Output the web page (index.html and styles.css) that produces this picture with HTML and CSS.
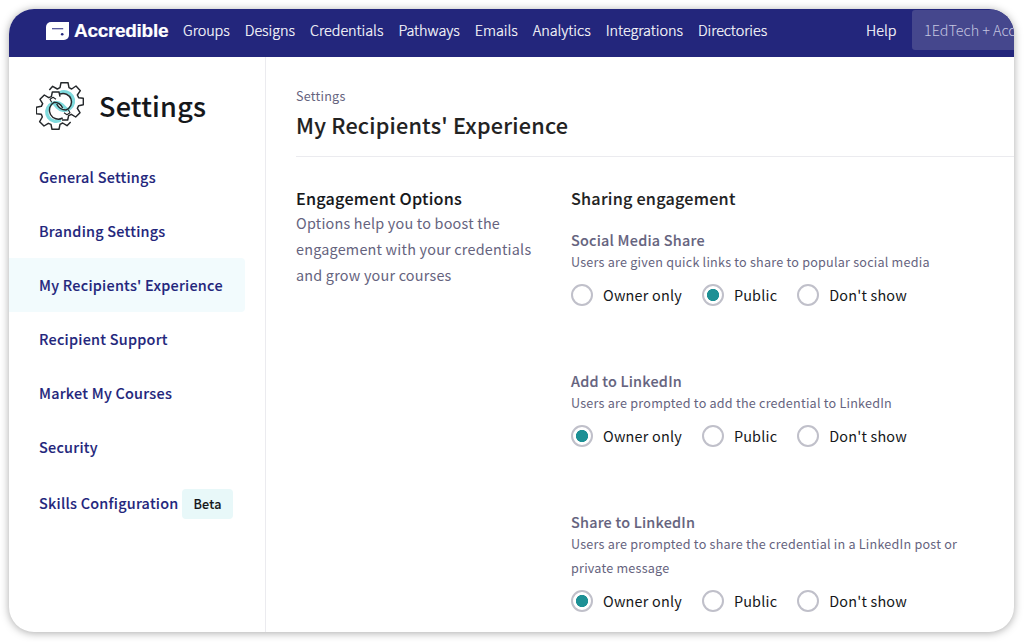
FILE: index.html
```html
<!DOCTYPE html>
<html lang="en">
<head>
<meta charset="utf-8">
<title>Settings</title>
<link rel="stylesheet" href="styles.css">
</head>
<body>
<div class="shell">
  <header class="topbar">
    <div class="brand">
      <svg class="brand-mark" viewBox="0 0 23 18" width="23" height="18"><path d="M5 0H23V13a5 5 0 0 1-5 5H0V5a5 5 0 0 1 5-5Z" fill="#fff"/><path d="M6 6.7H17.2" stroke="#23267c" stroke-width="1.1"/><circle cx="16.2" cy="12.2" r="1.3" fill="#23267c"/></svg>
      <span class="brand-name">Accredible</span>
    </div>
    <nav class="nav"><a>Groups</a><a>Designs</a><a>Credentials</a><a>Pathways</a><a>Emails</a><a>Analytics</a><a>Integrations</a><a>Directories</a></nav>
    <div class="account"><a class="help">Help</a><a class="org">1EdTech + Acc</a></div>
  </header>
  <div class="body">
    <aside class="sidebar">
      <div class="side-head">
        <svg class="gears" viewBox="18 18 144 144" width="48" height="48" fill="none">
          <g stroke="#7fdadd" stroke-width="10"><path d="M90 50A28 28 0 1 1 82 94L70 80"/><path d="M92 132A28 28 0 1 1 96 86L110 100"/></g>
          <g stroke="#25282b" stroke-width="4.4" stroke-linejoin="round">
            <path d="M58 42 68 31 82 39 90 35 93 20H114L117 35 125 39 138 30 151 44 142 57 146 65 160 67V86L146 89 142 97 150 110 137 123 124 115 116 119 113 132H96"/>
            <path d="M122 138 111 149 98 141 90 145 87 160H66L63 145 55 142 42 150 29 137 37 123 34 115 19 113V94L34 91 38 83 30 70 43 57 56 65 64 62 67 48H87L90 62"/>
            <path d="M90 54A25 25 0 1 1 108 102C94 102 86 96 80 84"/>
            <path d="M98 126A25 25 0 1 1 72 79C86 79 92 84 98 96"/>
            <path d="M65 79 60 70 69 64 78 70M115 101 120 110 111 116 102 110" stroke-width="3.4"/>
          </g>
        </svg>
        <h2>Settings</h2>
      </div>
      <ul class="menu">
        <li>General Settings</li>
        <li>Branding Settings</li>
        <li class="active">My Recipients' Experience</li>
        <li>Recipient Support</li>
        <li>Market My Courses</li>
        <li>Security</li>
        <li class="with-badge">Skills Configuration<span class="beta">Beta</span></li>
      </ul>
    </aside>
    <main class="main">
      <div class="page-head">
        <div class="crumb">Settings</div>
        <h1>My Recipients' Experience</h1>
      </div>
      <div class="columns">
        <section class="intro">
          <h3>Engagement Options</h3>
          <p>Options help you to boost the<br>engagement with your credentials<br>and grow your courses</p>
        </section>
        <section class="options">
          <h3>Sharing engagement</h3>
          <div class="option">
            <h4>Social Media Share</h4>
            <p>Users are given quick links to share to popular social media</p>
            <div class="radios"><label><i></i>Owner only</label><label><i class="on"></i>Public</label><label><i></i>Don't show</label></div>
          </div>
          <div class="option">
            <h4>Add to LinkedIn</h4>
            <p>Users are prompted to add the credential to LinkedIn</p>
            <div class="radios"><label><i class="on"></i>Owner only</label><label><i></i>Public</label><label><i></i>Don't show</label></div>
          </div>
          <div class="option">
            <h4>Share to LinkedIn</h4>
            <p>Users are prompted to share the credential in a LinkedIn post or<br>private message</p>
            <div class="radios"><label><i class="on"></i>Owner only</label><label><i></i>Public</label><label><i></i>Don't show</label></div>
          </div>
        </section>
      </div>
    </main>
  </div>
</div>
</body>
</html>
```
FILE: styles.css
```css
* { box-sizing: border-box; margin: 0; padding: 0; }
body { height: 642px; padding: 9px 10px 10px 9px; overflow: hidden; background: #fff; font: 14.4px/26px "Noto Sans CJK SC", "Noto Sans", sans-serif; letter-spacing: .23px; color: #15171a; }
.shell { height: 623px; border-radius: 25px; overflow: hidden; background: #fff; box-shadow: 0 1px 9px rgba(0,0,0,.34); display: flex; flex-direction: column; }
.topbar { height: 48px; flex: none; background: #23267c; display: flex; align-items: center; color: #fff; padding: 0 0 4px 37px; white-space: nowrap; font-weight: 300; line-height: 42px; letter-spacing: -.03px; -webkit-text-stroke: .2px currentColor; }
.brand { display: flex; align-items: center; gap: 5px; width: 137px; }
.brand-name { font: 700 19px/44px "Liberation Sans", Arial, sans-serif; letter-spacing: -.3px; -webkit-text-stroke: .2px #fff; }
.nav { display: flex; gap: 15px; padding-bottom: 2px; }
.account { margin: 1px 0 0 auto; align-self: flex-start; display: flex; width: 148px; flex: none; line-height: 40px; }
.help { width: 46px; flex: none; }
.org { height: 40px; flex: 1; background: #45478d; color: #c4c5e0; border-radius: 3px 0 0 3px; padding-left: 12px; -webkit-text-stroke: 0; }
.body { flex: 1; display: flex; min-height: 0; }
.sidebar { width: 257px; flex: none; border-right: 1px solid #ebebef; }
.side-head { display: flex; align-items: center; gap: 15px; height: 97px; padding-left: 27px; }
h2 { font-size: 27px; font-weight: 500; line-height: 40px; }
.menu { list-style: none; margin-top: -4px; color: #23267c; font-weight: 500; letter-spacing: .25px; }
.menu li { height: 54px; line-height: 54px; padding-left: 30px; margin-right: 20px; white-space: nowrap; }
.menu .active { background: #f2fbfd; border-radius: 0 4px 4px 0; }
.menu .with-badge { height: 59px; line-height: 57px; display: flex; align-items: center; gap: 3.5px; }
.menu .with-badge { line-height: 26px; padding-bottom: 1px; }
.menu .beta { height: 30px; line-height: 30px; width: 51px; margin-top: 1px; text-align: center; border-radius: 4px; background: #e8f8f9; color: #15171a; font-size: 12.6px; }
.main { flex: 1; min-width: 0; padding-left: 30px; }
.page-head { height: 100px; border-bottom: 1px solid #ebebef; padding-top: 29px; }
.crumb { font-size: 12.6px; line-height: 20px; color: #65637e; }
h1 { font-size: 21.6px; line-height: 36px; font-weight: 500; color: #222; margin-top: 1px; }
.columns { display: grid; grid-template-columns: 275px 1fr; padding-top: 28px; }
h3 { font-size: 16.2px; font-weight: 500; line-height: 26px; }
h1, h2, h3, h4, .menu { -webkit-text-stroke: .1px currentColor; }
.intro p { color: #65637e; margin-top: -1px; letter-spacing: .21px; }
.options h3 { color: #222; margin-bottom: 16px; }
.option { height: 141px; color: #65637e; }
h4 { font-size: 14.4px; font-weight: 500; line-height: 26px; }
.option p { font-size: 12.6px; line-height: 24px; margin-top: -3px; letter-spacing: .22px; }
.radios { display: flex; gap: 20px; color: #15171a; margin-top: 8px; line-height: 26px; letter-spacing: .2px; }
.radios label { display: flex; align-items: center; gap: 10px; white-space: nowrap; }
.radios i { width: 22px; height: 22px; border: 2px solid #c0c0ca; border-radius: 50%; background: #fff; }
.radios i.on { background: radial-gradient(circle, #1d9095 5.7px, #fff 6.5px); }
```
